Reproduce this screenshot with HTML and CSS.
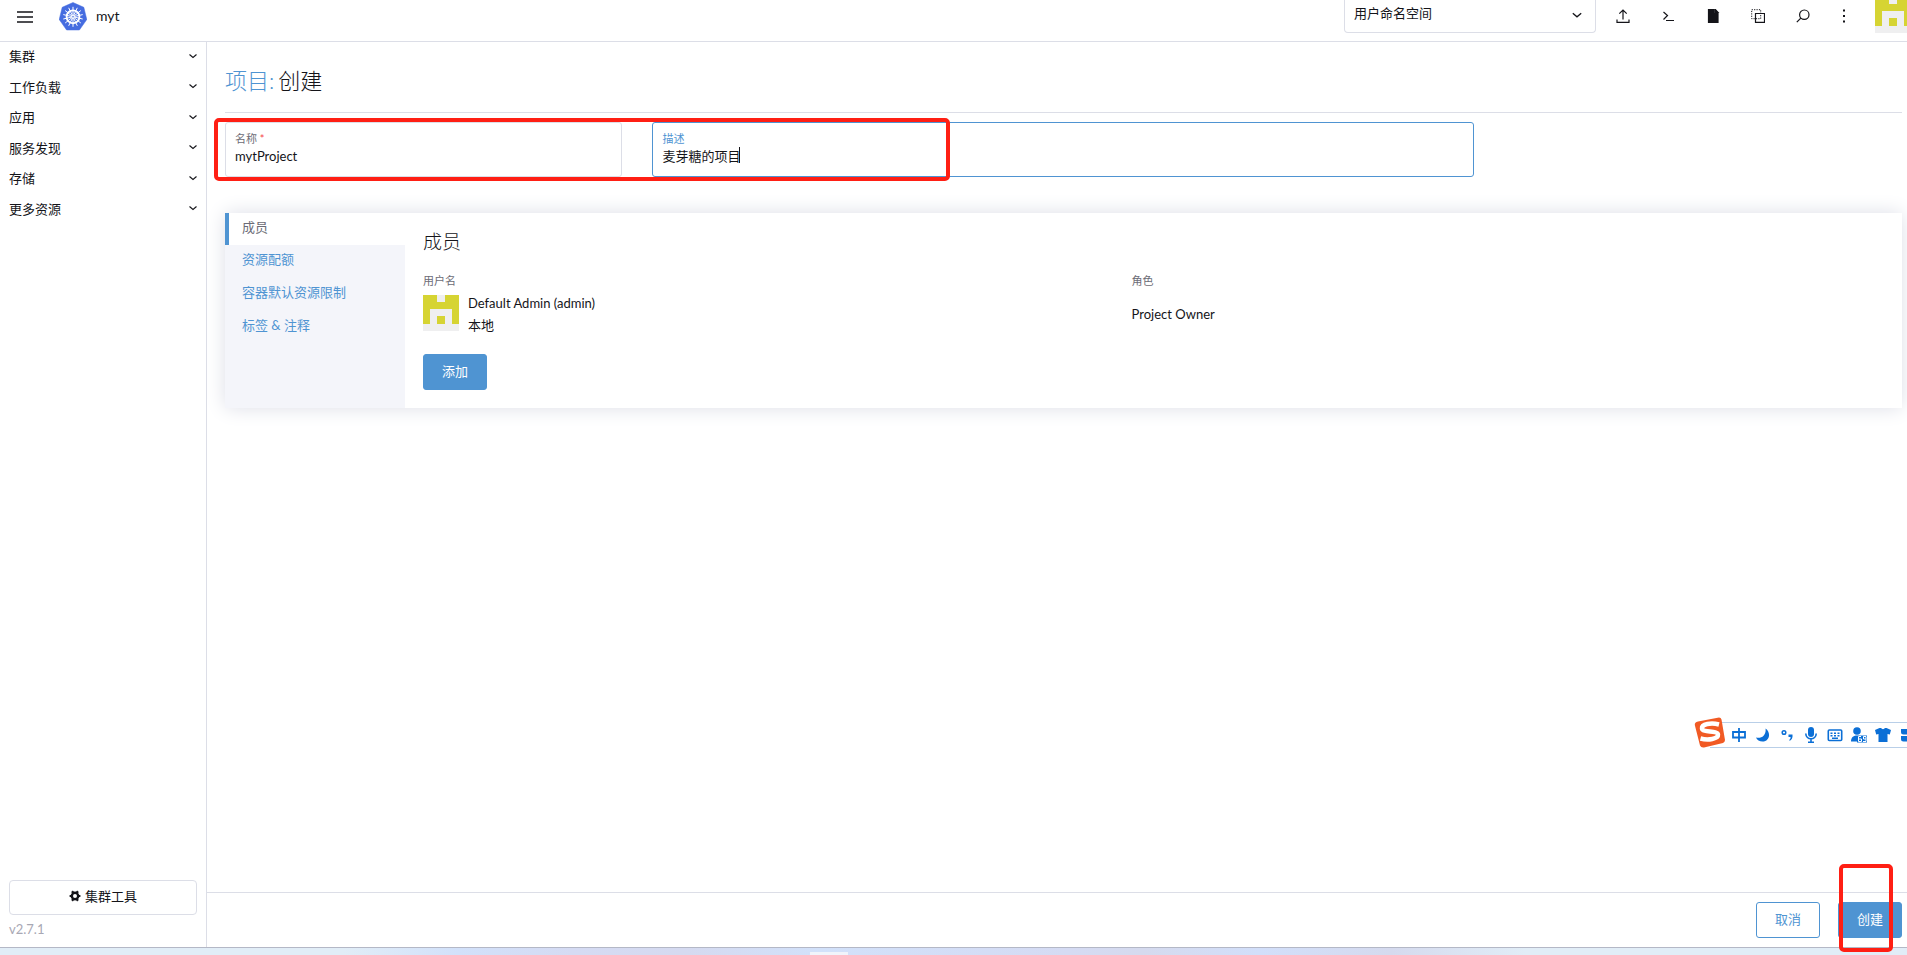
FILE: index.html
```html
<!DOCTYPE html>
<html lang="zh-CN">
<head>
<meta charset="utf-8">
<title>myt</title>
<link rel="stylesheet" href="styles.css">
</head>
<body>
<svg class="defs" aria-hidden="true">
  <symbol id="chevron" viewBox="0 0 10 10"><path d="M1.500 3.500 5 6.500 8.500 3.500" fill="none" stroke="currentColor" stroke-width="1.100"/></symbol>
  <symbol id="avatar" viewBox="0 0 36 36"><path fill="#efeff0" d="M0 0h36v36H0z"/><path fill="#d6d433" d="M0 0h14v7h8V0h14v29h-7V14H7v15H0zM14 21h8v8h-8z"/></symbol>
</svg>
<div class="app">
  <header class="topbar">
    <button class="icon-btn menu" aria-label="菜单"><svg width="16" height="12" viewBox="0 0 16 12"><path d="M0 1h16M0 6h16M0 11h16" stroke="#141419" stroke-width="1.700"/></svg></button>
    <svg class="logo" viewBox="0 0 28 28"><path d="M14 0 24.800 4.800 27.800 17 20.400 27.500H7.600L.2 17 3.200 4.800z" fill="#456ce0" stroke="#456ce0" stroke-linejoin="round" stroke-width=".5"/><g stroke="#fff" fill="none"><circle cx="14" cy="14.300" r="6.400" stroke-width="1.900"/><path d="M14 4.300v20M6.200 8.100l15.600 12.400M4.300 16.500l19.400-4.400M9.700 23.300l8.600-18M18.300 23.300l-8.600-18M4.300 12.100l19.400 4.400M6.200 20.500 21.800 8.100" stroke-width="1"/></g><circle cx="14" cy="14.300" r="1.300" fill="#456ce0" stroke="#fff"/></svg>
    <span class="cluster">myt</span>
    <div class="ns-wrap">
      <select class="ns" aria-label="命名空间"><option>用户命名空间</option></select>
      <svg class="ns-arrow"><use href="#chevron"/></svg>
    </div>
    <nav class="tools">
      <button class="icon-btn" aria-label="导入"><svg viewBox="0 0 14 14"><path d="M7 10.500V1M3.300 4.600 7 1l3.700 3.600M1 10.500v2.800h12v-2.800"/></svg></button>
      <button class="icon-btn" aria-label="终端"><svg viewBox="0 0 14 14"><path d="m2.500 3 4 3.500-4 4M5 11.500h8"/></svg></button>
      <button class="icon-btn" aria-label="文件"><svg viewBox="0 0 14 14"><path d="M2.500.5H8v4h4v9H2.500zM9.300.5 12 3.300H9.300z" fill="#141419"/></svg></button>
      <button class="icon-btn" aria-label="复制"><svg viewBox="0 0 14 14"><path d="M4.500 4.500h9v8.800h-9z"/><path d="M.7.7h9v9h-9z" stroke-dasharray="1.200 1.200" stroke-width="1"/></svg></button>
      <button class="icon-btn" aria-label="搜索"><svg viewBox="0 0 14 14"><circle cx="8.300" cy="5.700" r="4.700"/><path d="m4.800 9.200-4 4"/></svg></button>
      <button class="icon-btn dots" aria-label="更多"><svg viewBox="0 0 14 14"><path d="M6 .5h2v2H6zM6 6h2v2H6zM6 11.500h2v2H6z" fill="#141419" stroke="none"/></svg></button>
    </nav>
    <svg class="user"><use href="#avatar"/></svg>
  </header>
  <div class="body">
    <aside class="sidebar">
      <nav class="groups">
        <a href="#">集群<svg><use href="#chevron"/></svg></a>
        <a href="#">工作负载<svg><use href="#chevron"/></svg></a>
        <a href="#">应用<svg><use href="#chevron"/></svg></a>
        <a href="#">服务发现<svg><use href="#chevron"/></svg></a>
        <a href="#">存储<svg><use href="#chevron"/></svg></a>
        <a href="#">更多资源<svg><use href="#chevron"/></svg></a>
      </nav>
      <button class="cluster-tools"><svg viewBox="0 0 12 12"><circle cx="6" cy="6" r="3.200" fill="none" stroke="#141419" stroke-width="2.400"/><path d="M3 1.200 4.400 3M9 1.200 7.600 3M3 10.800 4.400 9M9 10.800 7.600 9M.6 6h2M9.400 6h2" stroke="#141419" stroke-width="2.200"/></svg>集群工具</button>
      <span class="version">v2.7.1</span>
    </aside>
    <main class="main">
      <div class="content">
        <h1><a href="#">项目:</a><span>创建</span></h1>
        <div class="fields">
          <div class="field name"><label for="name">名称<b> *</b></label><input id="name" value="mytProject"></div>
          <div class="field desc"><label for="desc">描述</label><div class="entry"><input id="desc" value="麦芽糖的项目"><i class="caret"></i></div></div>
          <div class="mark mark-fields"></div>
        </div>
        <section class="tabs">
          <nav class="tablist">
            <a class="active" href="#">成员</a>
            <a href="#">资源配额</a>
            <a href="#">容器默认资源限制</a>
            <a href="#">标签 &amp; 注释</a>
          </nav>
          <div class="panel">
            <h2>成员</h2>
            <table>
              <thead><tr><th class="col-user">用户名</th><th>角色</th></tr></thead>
              <tbody><tr>
                <td><div class="member"><svg><use href="#avatar"/></svg><div><div>Default Admin (admin)</div><div>本地</div></div></div></td>
                <td>Project Owner</td>
              </tr></tbody>
            </table>
            <button class="btn primary">添加</button>
          </div>
        </section>
      </div>
      <footer class="footer">
        <button class="btn">取消</button>
        <div class="submit"><button class="btn primary">创建</button><div class="mark mark-submit"></div></div>
      </footer>
    </main>
  </div>
  <div class="taskbar"><span></span></div>
</div>
<div class="ime">
  <svg class="sogou" viewBox="0 0 32 32"><path d="M4 4.500 25 .5q2 0 2.500 2L31 23q0 2-2 3L10 30.500q-3 .5-4-2L.8 8q-.3-3 3.200-3.500z" fill="#f15a24"/><path d="M25 7.500C17 5.500 7.500 7 8 11.500c.5 4.500 15.500 1.500 16 6 .4 4.500-10 6-17.500 4" fill="none" stroke="#fff" stroke-width="4.500"/></svg>
  <div class="ime-bar">
    <svg viewBox="0 0 16 16"><path d="M2 5h12v5.500H2zM8 1v14" fill="none" stroke="#0b6fd6" stroke-width="1.800"/></svg>
    <svg viewBox="0 0 16 16"><path d="M10.500 1.500c6 4 4 13-3 13-3 0-5.500-1.500-6.500-4 6 1.500 10.500-3 9.500-9z"/></svg>
    <svg viewBox="0 0 16 16"><circle cx="5" cy="5.500" r="1.800" fill="none" stroke="#0b6fd6" stroke-width="1.500"/><path d="M9.500 7.500h4c.5 3.500-1 5.500-3 6.500v-1.500c1-.8 1.200-1.500 1-2.500h-2z"/></svg>
    <svg viewBox="0 0 16 16"><rect x="5" y="0" width="6" height="10" rx="3"/><path d="M2.800 6.500c0 7 10.400 7 10.400 0M8 12v4M5 15.200h6" fill="none" stroke="#0b6fd6" stroke-width="1.600"/></svg>
    <svg viewBox="0 0 16 16"><rect x="1.300" y="3" width="13.400" height="10.500" rx="1" fill="none" stroke="#0b6fd6" stroke-width="1.600"/><path d="M3.500 5.500h2v1.500h-2zM7 5.500h2v1.500H7zM10.500 5.500h2v1.500h-2zM3.500 8h2v1.500h-2zM7 8h2v1.500H7zM10.500 8h2v1.500h-2zM5 10.500h6V12H5z"/></svg>
    <svg viewBox="0 0 16 16"><circle cx="6" cy="4" r="3.800"/><path d="M0 14.500C0 10 3 8.500 6 8.500h10v7H6v-1z"/><path d="M10 9.500H7.500v5h3V12h-3M15 12h-2.500V9.500H15v5h-3" fill="none" stroke="#fff" stroke-width="1"/></svg>
    <svg viewBox="0 0 16 16"><path d="M0 3 4.500 1h1.500c1 1.500 3 1.500 4 0h1.500L16 3l-1.200 4.500L12.500 7v8h-9V7l-2.300.5z"/></svg>
    <svg viewBox="0 0 16 16"><path d="M2 2h6v5.500H4.500Q2 7.500 2 5zM2 9h6v5.500H4.500Q2 14.500 2 12zM9.500 2h5v5h-5zM9.500 9h5v5h-5z"/></svg>
  </div>
</div>
</body>
</html>
```
FILE: styles.css
```css
* { box-sizing: border-box; }
body {
  margin: 0;
  overflow: hidden;
  background: #fff;
  color: #141419;
  font: 13px/21px Lato, "Noto Sans CJK SC", sans-serif;
}
a { color: #4f94d2; text-decoration: none; }
button, input, select { font: inherit; color: inherit; }
button { cursor: pointer; }
.defs { position: absolute; width: 0; height: 0; }
.app { display: flex; flex-direction: column; height: 100vh; }

.topbar {
  display: flex;
  align-items: flex-start;
  height: 42px;
  padding-left: 12px;
  border-bottom: 1px solid #dcdee7;
}
.icon-btn {
  display: flex;
  align-items: center;
  justify-content: center;
  width: 45px;
  height: 32px;
  padding: 0;
  border: 0;
  background: none;
}
.menu { width: 26px; height: 33px; }
.logo { width: 28px; height: 29px; margin: 2px 9px 0 21px; }
.cluster { font-size: 14px; line-height: 32px; }
.ns-wrap { position: relative; margin-left: auto; }
.ns {
  display: block;
  width: 252px;
  height: 33px;
  padding: 0 9px 6px;
  border: 1px solid #dcdee7;
  border-top: 0;
  border-radius: 0 0 4px 4px;
  background: #fff;
  appearance: none;
}
.ns-arrow { position: absolute; right: 13px; top: 9px; width: 12px; height: 12px; }
.tools { display: flex; margin-left: 4px; }
.tools svg { width: 14px; height: 14px; fill: none; stroke: #141419; stroke-width: 1.2; }
.dots { width: 37px; }
.user { flex: none; width: 36px; height: 36px; margin: -3px -4px 0 13px; }

.body { display: flex; flex: 1; min-height: 0; }
.sidebar {
  display: flex;
  flex-direction: column;
  width: 207px;
  padding: 0 9px 7px;
  border-right: 1px solid #dcdee7;
}
.groups {
  display: flex;
  flex-direction: column;
  justify-content: space-between;
  height: 182px;
  margin-bottom: auto;
}
.groups a {
  display: flex;
  justify-content: space-between;
  align-items: center;
  height: 29px;
  color: #141419;
}
.groups svg { width: 10px; height: 10px; margin: 0 -1px 2px 0; }
.cluster-tools {
  display: flex;
  align-items: center;
  justify-content: center;
  gap: 4px;
  height: 35px;
  padding-bottom: 4px;
  border: 1px solid #dcdee7;
  border-radius: 4px;
  background: #fff;
}
.cluster-tools svg { width: 12px; height: 12px; }
.version { margin-top: 4px; color: #a8a8b4; }

.main { display: flex; flex-direction: column; flex: 1; min-width: 0; }
.content { flex: 1; padding: 21px 5px 0 18px; }
h1 {
  display: flex;
  gap: 4px;
  margin: 0 0 9px;
  padding-bottom: 14px;
  border-bottom: 1px solid #dcdee7;
  font-size: 22px;
  line-height: 35px;
  font-weight: 300;
}
.fields { position: relative; display: flex; gap: 30px; margin-bottom: 36px; }
.field {
  height: 55px;
  padding: 7px 9px;
  border: 1px solid #dcdee7;
  border-radius: 3px;
}
.field label { display: block; font-size: 11px; line-height: 17px; color: #6c6c76; }
.field b { color: #f64747; font-weight: 400; }
.field input {
  display: block;
  width: 100%;
  height: 18px;
  padding: 0;
  border: 0;
  outline: 0;
  background: none;
}
.name { width: 23.7%; }
.desc { width: 49%; border-color: #4f94d2; }
.field.desc label { color: #4f94d2; }
.desc input { width: 78px; }
.entry { display: flex; }
.caret { width: 1px; height: 16px; margin-left: -1px; background: #141419; }
.mark { position: absolute; border: 4px solid #ff1f14; border-radius: 5px; pointer-events: none; }
.mark-fields { left: -11px; top: -4px; width: 736px; height: 63px; }

.tabs { display: flex; height: 195px; border-radius: 4px; box-shadow: 0 0 20px #dcdee7; }
.tablist { width: 180px; background: #f4f5fa; }
.tablist a { display: flex; align-items: center; height: 33px; padding: 0 17px 5px; }
.tablist .active { height: 32px; padding: 0 13px 3px; border-left: 4px solid #4f94d2; background: #fff; color: #6c6c76; }
.panel { flex: 1; padding: 15px 18px; background: #fff; }
h2 { margin: 0 0 16px; font-size: 19px; line-height: 28px; font-weight: 300; }
table { width: 100%; border-collapse: collapse; table-layout: fixed; margin-bottom: 18px; }
th { padding: 0; text-align: left; font-size: 11px; line-height: 17px; font-weight: 400; color: #6c6c76; }
.col-user { width: 48.5%; }
td { padding: 3px 0 0; line-height: 22px; }
.member { display: flex; align-items: center; gap: 9px; }
.member svg { width: 36px; height: 36px; margin-bottom: 2px; }
.btn {
  height: 36px;
  padding: 0 18px 2px;
  border: 1px solid #4f94d2;
  border-radius: 3px;
  background: #fff;
  color: #4f94d2;
}
.primary { background: #4f94d2; color: #fff; }
.footer {
  display: flex;
  justify-content: flex-end;
  gap: 18px;
  height: 55px;
  padding: 9px 5px;
  border-top: 1px solid #dcdee7;
}
.submit { position: relative; }
.mark-submit { left: 1px; top: -38px; width: 54px; height: 88px; }
.taskbar {
  height: 8px;
  padding-left: 810px;
  border-top: 1px solid #b4b8c6;
  background: linear-gradient(90deg, #e1edf7 0 18%, #d2e1fa 24%, #d5dbf3 30%, #d5daf0 36%, #d2e1fa 43%, #d5dbf3 56%, #d5daee 60%, #d2dffa 66%, #d5daee 73%, #e1edf7 80%);
}
.taskbar span { display: block; width: 38px; height: 3px; margin-top: 4px; background: #f0f4fb; }

.ime { position: absolute; right: 0; bottom: 203px; display: flex; align-items: center; }
.sogou { position: relative; width: 32px; height: 32px; margin: 0 -16px 3px 0; }
.ime-bar {
  display: flex;
  align-items: center;
  gap: 8px;
  width: 197px;
  height: 26px;
  padding-left: 21px;
  border: solid #b9cfe8;
  border-width: 1px 0;
  background: #fff;
  overflow: hidden;
}
.ime-bar svg { flex: none; width: 16px; height: 16px; fill: #0b6fd6; }
```
